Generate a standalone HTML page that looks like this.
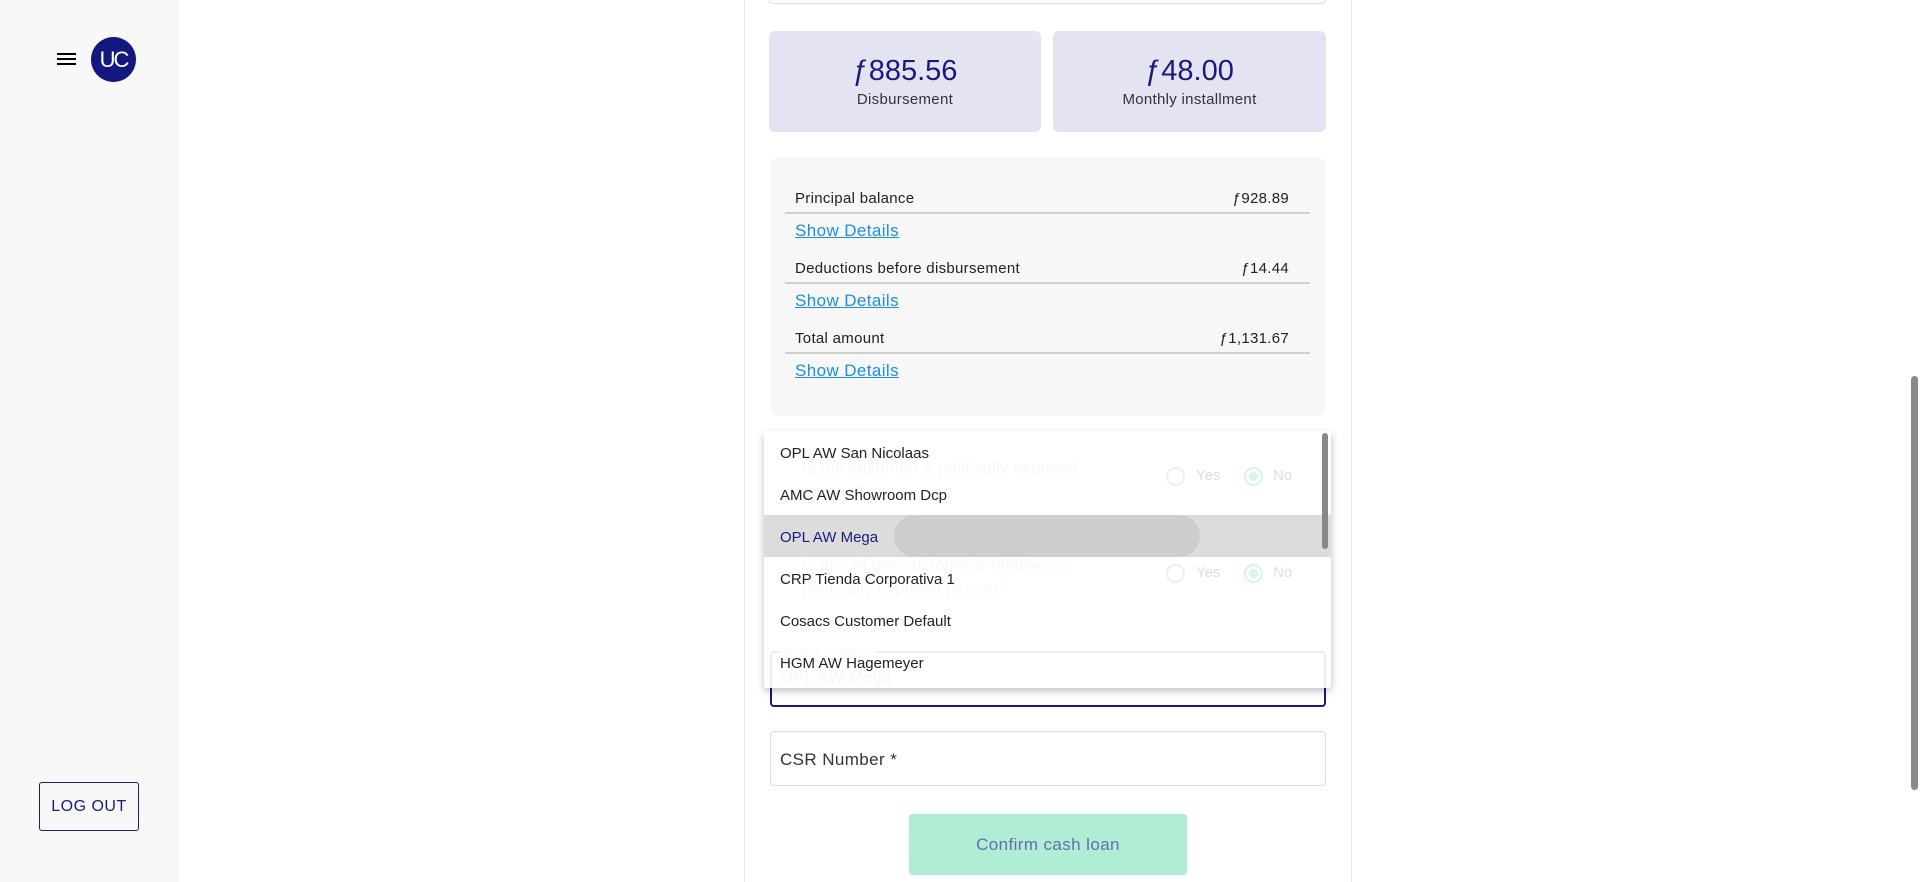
<!DOCTYPE html>
<html><head><meta charset="utf-8"><style>
*{box-sizing:border-box;margin:0;padding:0}
body{width:1920px;height:882px;overflow:hidden;background:#fff;font-family:"Liberation Sans",sans-serif;position:relative;color:#222}
.a{position:absolute}
.side{left:0;top:0;width:179px;height:882px;background:#f8f8f8}
.card{background:#e4e3f2;border-radius:6px;text-align:center;color:#1a1a7a}
.card .v{font-size:29px;margin-top:24px}
.card .l{font-size:15px;color:#333;margin-top:3px;letter-spacing:.3px}
.row{font-size:15px;color:#222;letter-spacing:.3px}
.line{height:2px;background:#cfcfcf}
.sd{font-size:17px;color:#1a8fe0;text-decoration:underline;letter-spacing:.4px}
.item{left:764px;width:567px;height:42px;font-size:15px;line-height:46px;padding-left:16px;color:#222}
</style></head><body>
<div class="a side"></div>
<div class="a" style="left:57px;top:53px;width:19px;height:2px;background:#000;box-shadow:0 5px 0 #000,0 10px 0 #000"></div>
<div class="a" style="left:91px;top:37px;width:45px;height:45px;border-radius:50%;background:#12187e;color:#fff;font-size:22px;line-height:45px;text-align:center;letter-spacing:-2px;font-weight:300">UC</div>
<div class="a" style="left:39px;top:782px;width:100px;height:49px;border:1px solid #1a1a80;border-radius:3px;color:#1a1a80;font-size:16px;line-height:47px;text-align:center;letter-spacing:.5px">LOG OUT</div>

<div class="a" style="left:744px;top:0;width:1px;height:882px;background:#e8e8e8"></div>
<div class="a" style="left:1351px;top:0;width:1px;height:882px;background:#e8e8e8"></div>
<div class="a" style="left:769px;top:-10px;width:557px;height:14px;border:1px solid #ddd;border-radius:4px"></div>

<div class="a card" style="left:769px;top:31px;width:272px;height:101px"><div class="v">ƒ885.56</div><div class="l">Disbursement</div></div>
<div class="a card" style="left:1053px;top:31px;width:273px;height:101px"><div class="v">ƒ48.00</div><div class="l">Monthly installment</div></div>

<div class="a" style="left:770px;top:157px;width:556px;height:259px;background:#f7f7f7;border-radius:10px"></div>
<div class="a row" style="left:795px;top:190px">Principal balance</div><div class="a row" style="left:1200px;width:89px;text-align:right;top:190px">ƒ928.89</div>
<div class="a line" style="left:785px;top:212px;width:525px"></div>
<div class="a sd" style="left:795px;top:221px">Show Details</div>
<div class="a row" style="left:795px;top:260px">Deductions before disbursement</div><div class="a row" style="left:1200px;width:89px;text-align:right;top:260px">ƒ14.44</div>
<div class="a line" style="left:785px;top:282px;width:525px"></div>
<div class="a sd" style="left:795px;top:291px">Show Details</div>
<div class="a row" style="left:795px;top:330px">Total amount</div><div class="a row" style="left:1200px;width:89px;text-align:right;top:330px">ƒ1,131.67</div>
<div class="a line" style="left:785px;top:352px;width:525px"></div>
<div class="a sd" style="left:795px;top:361px">Show Details</div>

<div class="a" style="left:802px;top:457px;font-size:16px;color:#999;line-height:24px;letter-spacing:.5px">Is the customer a politically exposed<br>person?</div>
<div class="a" style="left:802px;top:554px;font-size:16px;color:#999;line-height:24px;letter-spacing:.5px">Is any of this customer's relatives a<br>politically exposed person?</div>
<div class="a" style="left:770px;top:651px;width:556px;height:56px;border:2px solid #1a1a80;border-radius:4px"></div>
<div class="a" style="left:780px;top:645px;font-size:13px;color:#999;background:#fff;padding:0 4px">Select a store *</div>
<div class="a" style="left:780px;top:668px;font-size:17px;color:#888">OPL AW Mega</div>

<div class="a" style="left:764px;top:431px;width:567px;height:257px;background:rgba(255,255,255,.92);box-shadow:0 3px 8px rgba(0,0,0,.25);border-radius:3px"></div>
<div class="a" style="left:764px;top:515px;width:567px;height:42px;background:#dcdcdc"></div>
<div class="a" style="left:894px;top:515px;width:306px;height:42px;background:#cdcdcd;border-radius:21px"></div>
<div class="a" style="left:1322px;top:433px;width:6px;height:116px;background:#888;border-radius:3px"></div>
<div class="a item" style="top:431px">OPL AW San Nicolaas</div>
<div class="a item" style="top:473px">AMC AW Showroom Dcp</div>
<div class="a item" style="top:515px;color:#1a1a80">OPL AW Mega</div>
<div class="a item" style="top:557px">CRP Tienda Corporativa 1</div>
<div class="a item" style="top:599px">Cosacs Customer Default</div>
<div class="a item" style="top:641px">HGM AW Hagemeyer</div>
<div class="a" style="left:1166px;top:467px;width:19px;height:19px;border:2px solid #eee;border-radius:50%"></div>
<div class="a" style="left:1196px;top:467px;font-size:15px;color:#ddd">Yes</div>
<div class="a" style="left:1244px;top:467px;width:19px;height:19px;border:2px solid #d8f3e8;border-radius:50%;background:radial-gradient(#d8f3e8 4px,transparent 5px)"></div>
<div class="a" style="left:1273px;top:467px;font-size:15px;color:#ddd">No</div>
<div class="a" style="left:1166px;top:564px;width:19px;height:19px;border:2px solid #eee;border-radius:50%"></div>
<div class="a" style="left:1196px;top:564px;font-size:15px;color:#ddd">Yes</div>
<div class="a" style="left:1244px;top:564px;width:19px;height:19px;border:2px solid #d8f3e8;border-radius:50%;background:radial-gradient(#d8f3e8 4px,transparent 5px)"></div>
<div class="a" style="left:1273px;top:564px;font-size:15px;color:#ddd">No</div>

<div class="a" style="left:770px;top:731px;width:556px;height:55px;border:1px solid #ddd;border-radius:4px"></div>
<div class="a" style="left:780px;top:750px;font-size:17px;color:#333;letter-spacing:.4px">CSR Number *</div>
<div class="a" style="left:909px;top:814px;width:278px;height:61px;background:#afeed4;border-radius:3px;color:#6a6ab0;font-size:17px;line-height:62px;text-align:center;letter-spacing:.4px">Confirm cash loan</div>

<div class="a" style="left:1911px;top:376px;width:7px;height:414px;background:#8a8a8a;border-radius:4px"></div>
</body></html>
